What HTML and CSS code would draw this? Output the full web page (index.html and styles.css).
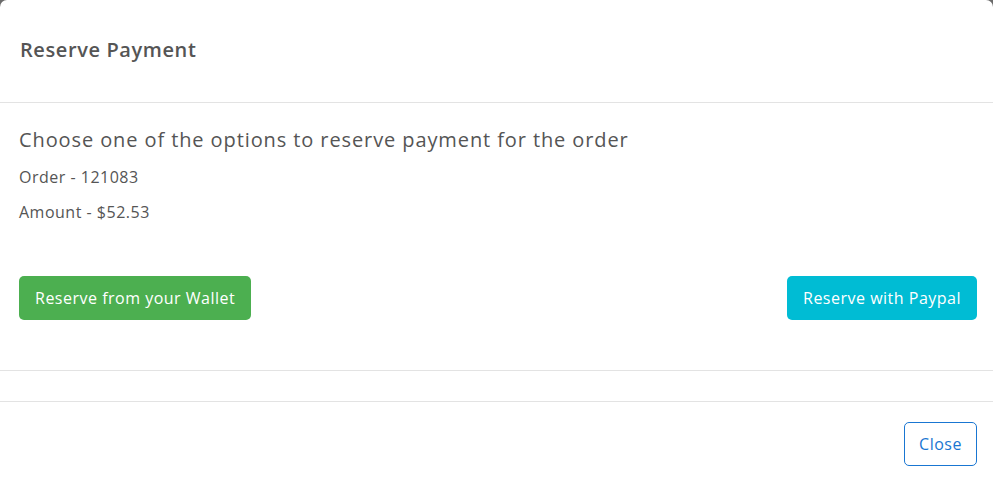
FILE: index.html
```html
<!DOCTYPE html>
<html>
<head>
<meta charset="utf-8">
<link rel="stylesheet" href="styles.css">
</head>
<body>
<div class="modal">
  <div class="modal-header">
    <h4 class="modal-title">Reserve Payment</h4>
  </div>
  <div class="modal-body">
    <h5 class="lead">Choose one of the options to reserve payment for the order</h5>
    <p class="info">Order - 121083</p>
    <p class="info">Amount - $52.53</p>
    <div class="actions">
      <button class="btn btn-success">Reserve from your Wallet</button>
      <button class="btn btn-info">Reserve with Paypal</button>
    </div>
  </div>
  <div class="modal-spacer"></div>
  <div class="modal-footer">
    <button class="btn btn-outline">Close</button>
  </div>
</div>
</body>
</html>
```

FILE: styles.css
```css
html, body {
  margin: 0;
  padding: 0;
  height: 100%;
  overflow: hidden;
}
body {
  background: #6b6b6b;
  font-family: "Open Sans", "Noto Sans", sans-serif;
  color: #555;
}
.modal {
  background: #fff;
  border-radius: 7px;
  min-height: 490px;
  display: flex;
  flex-direction: column;
}
.modal-header {
  box-sizing: border-box;
  height: 103px;
  padding: 0 20px;
  display: flex;
  align-items: center;
  border-bottom: 1px solid #e3e3e3;
}
.modal-title {
  margin: 0;
  font-size: 20px;
  font-weight: 600;
  color: #555;
  letter-spacing: 0.6px;
  padding-bottom: 4px;
}
.modal-body {
  padding: 22px 16px 0 19px;
  height: 245px;
  border-bottom: 1px solid #e3e3e3;
}
.lead {
  margin: 0;
  font-size: 20px;
  font-weight: 400;
  line-height: 30px;
  letter-spacing: 0.9px;
}
.info {
  margin: 9px 0 0;
  font-size: 16px;
  line-height: 26px;
  letter-spacing: 0.5px;
}
.actions {
  display: flex;
  justify-content: space-between;
  margin-top: 51px;
}
.btn {
  font-family: inherit;
  font-size: 16px;
  height: 44px;
  border-radius: 5px;
  border: 1px solid transparent;
  padding: 0 15px;
  color: #fff;
  letter-spacing: 0.5px;
  cursor: pointer;
}
.btn-success {
  background: #4caf50;
}
.btn-info {
  background: #00bcd4;
}
.modal-spacer {
  height: 30px;
  border-bottom: 1px solid #e3e3e3;
}
.modal-footer {
  display: flex;
  justify-content: flex-end;
  padding: 20px 16px;
}
.btn-outline {
  background: #fff;
  border-color: #1976d2;
  color: #1976d2;
  width: 73px;
  padding: 0;
}
```
